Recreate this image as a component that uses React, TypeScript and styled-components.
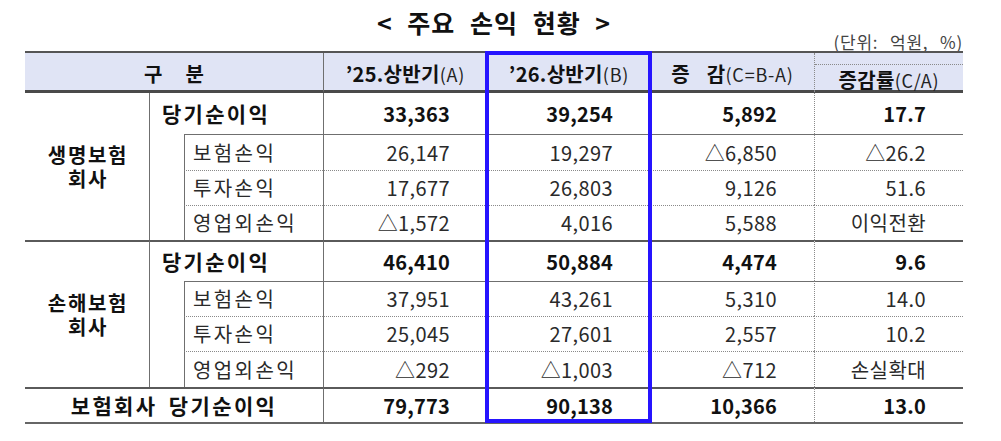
import React from 'react';
import styled, { createGlobalStyle, css } from 'styled-components';

type Rule = 'none' | 'solid' | 'dotted' | 'heavy';

const ruleCss = (r: Rule = 'none') => {
  switch (r) {
    case 'solid':
      return '1px solid #6f6f6f';
    case 'dotted':
      return '1px dotted #8a8a8a';
    case 'heavy':
      return '2px solid #5a5a5a';
    default:
      return 'none';
  }
};

const Global = createGlobalStyle`
  html, body { margin: 0; padding: 0; background: #ffffff; }
  body {
    font-family: "Noto Sans CJK KR", "Noto Sans", sans-serif;
    color: #1a1a1a;
  }
`;

const Page = styled.div`
  width: 1001px;
  height: 441px;
  box-sizing: border-box;
  padding: 8px 0 0 25px;
  overflow: hidden;
`;

const Report = styled.div`
  width: 938px;
  display: flex;
  flex-direction: column;
`;

const Title = styled.h1`
  margin: 0;
  height: 28px;
  line-height: 28px;
  text-align: center;
  font-size: 25px;
  font-weight: 700;
  letter-spacing: 1px;
  word-spacing: 8px;
  color: #111;
`;

const Unit = styled.div`
  align-self: flex-end;
  margin-top: -3px;
  height: 17px;
  font-size: 17px;
  line-height: 17px;
  color: #444;
  letter-spacing: 0.8px;
  word-spacing: 7px;
`;

const TableWrap = styled.div`
  position: relative;
  margin-top: 1px;
`;

const Grid = styled.div`
  display: grid;
  grid-template-columns: 124px 35px 139px 164px 163px 164px 149px;
  grid-template-rows: 40px 41px 36px 35px 35px 41px 35px 35px 36px 35px;
  border-top: 2px solid #555;
  border-bottom: 2px solid #666;
`;

const cellBase = css<{ $top?: Rule; $left?: Rule }>`
  box-sizing: border-box;
  display: flex;
  align-items: center;
  min-width: 0;
  border-top: ${(p) => ruleCss(p.$top)};
  border-left: ${(p) => ruleCss(p.$left)};
  line-height: 1.2;
  white-space: nowrap;
`;

const HeadCell = styled.div<{ $top?: Rule; $left?: Rule; $span?: number }>`
  ${cellBase};
  grid-column: span ${(p) => p.$span ?? 1};
  justify-content: center;
  align-items: baseline;
  padding-top: 9px;
  background: #e0e4f5;
  border-bottom: 3px solid #4a4a4a;
  font-size: 20px;
  font-weight: 700;
  color: #111;
`;

const HeadMain = styled.span<{ $gap?: number }>`
  font-size: 20px;
  font-weight: 700;
  word-spacing: ${(p) => p.$gap ?? 0}px;
  letter-spacing: 0.3px;
`;

const HeadNote = styled.span`
  font-size: 18px;
  font-weight: 400;
  letter-spacing: 0.8px;
  color: #222;
`;

const RateHead = styled(HeadCell)`
  padding-top: 11px;
  align-items: stretch;
`;

const RateHeadInner = styled.div`
  flex: 1;
  display: flex;
  align-items: baseline;
  justify-content: center;
  border-top: 1px dotted #8a8a8a;
  padding-top: 3px;
`;

const GroupLabel = styled.div<{ $top?: Rule; $left?: Rule }>`
  ${cellBase};
  grid-row: span 4;
  flex-direction: column;
  justify-content: center;
  text-align: center;
  font-size: 20px;
  font-weight: 700;
  line-height: 24px;
  letter-spacing: 1.7px;
  color: #111;
  padding-left: 2px;
  white-space: normal;
`;

const ItemLabel = styled.div<{ $top?: Rule; $left?: Rule }>`
  ${cellBase};
  grid-column: span 2;
  padding-left: 12px;
  font-size: 21px;
  font-weight: 700;
  letter-spacing: 2.3px;
  color: #111;
`;

const Spacer = styled.div<{ $top?: Rule; $left?: Rule }>`
  ${cellBase};
  grid-row: span 3;
`;

const SubLabel = styled.div<{ $top?: Rule; $left?: Rule }>`
  ${cellBase};
  padding-left: 8px;
  font-size: 20px;
  font-weight: 400;
  letter-spacing: 2.4px;
  color: #2a2a2a;
`;

const TotalLabel = styled.div<{ $top?: Rule; $left?: Rule }>`
  ${cellBase};
  grid-column: span 3;
  justify-content: center;
  font-size: 21px;
  font-weight: 700;
  letter-spacing: 2.4px;
  word-spacing: 4px;
  color: #111;
`;

const NumCell = styled.div<{ $top?: Rule; $left?: Rule; $bold?: boolean }>`
  ${cellBase};
  justify-content: flex-end;
  padding-right: 37px;
  font-size: 20px;
  font-weight: ${(p) => (p.$bold ? 700 : 400)};
  color: ${(p) => (p.$bold ? '#111' : '#2a2a2a')};
  letter-spacing: ${(p) => (p.$bold ? '0.2px' : '0.4px')};
`;

const Highlight = styled.div`
  position: absolute;
  top: 0;
  left: 460px;
  width: 167px;
  height: 372px;
  box-sizing: border-box;
  border: 4px solid #2614ff;
  pointer-events: none;
`;

type Row = { label: string; vals: string[] };
type Group = { name: string[]; total: string[]; items: Row[]; top: Rule };

const groups: Group[] = [
  {
    name: ['생명보험', '회사'],
    total: ['33,363', '39,254', '5,892', '17.7'],
    top: 'none',
    items: [
      { label: '보험손익', vals: ['26,147', '19,297', '△6,850', '△26.2'] },
      { label: '투자손익', vals: ['17,677', '26,803', '9,126', '51.6'] },
      { label: '영업외손익', vals: ['△1,572', '4,016', '5,588', '이익전환'] },
    ],
  },
  {
    name: ['손해보험', '회사'],
    total: ['46,410', '50,884', '4,474', '9.6'],
    top: 'heavy',
    items: [
      { label: '보험손익', vals: ['37,951', '43,261', '5,310', '14.0'] },
      { label: '투자손익', vals: ['25,045', '27,601', '2,557', '10.2'] },
      { label: '영업외손익', vals: ['△292', '△1,003', '△712', '손실확대'] },
    ],
  },
];

const colRules: Rule[] = ['solid', 'solid', 'solid', 'dotted'];

const Numbers: React.FC<{ vals: string[]; top: Rule; bold?: boolean }> = ({ vals, top, bold }) => (
  <>
    {vals.map((v, i) => (
      <NumCell key={i} $top={top} $left={colRules[i]} $bold={bold}>
        {v}
      </NumCell>
    ))}
  </>
);

export default function App() {
  return (
    <>
      <Global />
      <Page>
        <Report>
          <Title>&lt; 주요 손익 현황 &gt;</Title>
          <Unit>(단위: 억원, %)</Unit>
          <TableWrap>
            <Grid>
              <HeadCell $span={3}>
                <HeadMain $gap={18}>구 분</HeadMain>
              </HeadCell>
              <HeadCell $left="solid">
                <HeadMain>’25.상반기</HeadMain>
                <HeadNote>(A)</HeadNote>
              </HeadCell>
              <HeadCell $left="solid">
                <HeadMain>’26.상반기</HeadMain>
                <HeadNote>(B)</HeadNote>
              </HeadCell>
              <HeadCell $left="solid">
                <HeadMain $gap={12}>증 감</HeadMain>
                <HeadNote>(C=B-A)</HeadNote>
              </HeadCell>
              <RateHead $left="dotted">
                <RateHeadInner>
                  <HeadMain>증감률</HeadMain>
                  <HeadNote>(C/A)</HeadNote>
                </RateHeadInner>
              </RateHead>

              {groups.map((g) => (
                <React.Fragment key={g.name[0]}>
                  <GroupLabel $top={g.top}>
                    <span>{g.name[0]}</span>
                    <span>{g.name[1]}</span>
                  </GroupLabel>
                  <ItemLabel $top={g.top} $left="solid">
                    당기순이익
                  </ItemLabel>
                  <Numbers vals={g.total} top={g.top} bold />
                  <Spacer $left="solid" />
                  {g.items.map((it, idx) => {
                    const rule: Rule = idx === 0 ? 'solid' : 'dotted';
                    return (
                      <React.Fragment key={it.label}>
                        <SubLabel $top={rule} $left="solid">
                          {it.label}
                        </SubLabel>
                        <Numbers vals={it.vals} top={rule} />
                      </React.Fragment>
                    );
                  })}
                </React.Fragment>
              ))}

              <TotalLabel $top="heavy">보험회사 당기순이익</TotalLabel>
              <Numbers vals={['79,773', '90,138', '10,366', '13.0']} top="heavy" bold />
            </Grid>
            <Highlight />
          </TableWrap>
        </Report>
      </Page>
    </>
  );
}
